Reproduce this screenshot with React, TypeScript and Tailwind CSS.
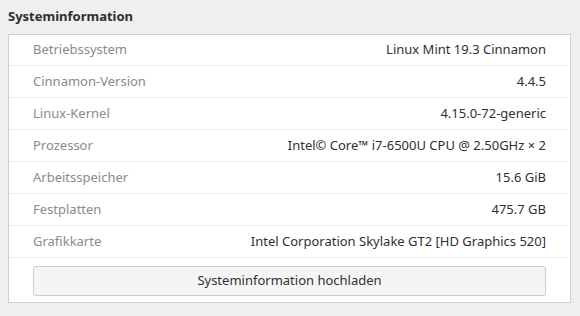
const rows: [string, string][] = [
  ["Betriebssystem", "Linux Mint 19.3 Cinnamon"],
  ["Cinnamon-Version", "4.4.5"],
  ["Linux-Kernel", "4.15.0-72-generic"],
  ["Prozessor", "Intel\u00a9 Core\u2122 i7-6500U CPU @ 2.50GHz \u00d7 2"],
  ["Arbeitsspeicher", "15.6 GiB"],
  ["Festplatten", "475.7 GB"],
  ["Grafikkarte", "Intel Corporation Skylake GT2 [HD Graphics 520]"],
]

export default function App() {
  return (
    <div className="w-[580px] h-[316px] bg-[#efefef] font-['Noto_Sans',sans-serif] text-[13px] text-[#303030] px-2 pt-[7px]">
      <h1 className="font-bold text-[13px] leading-[18px] text-[#2e2e2e] mb-[9px]">Systeminformation</h1>
      <div className="w-[563px] bg-white border border-[#cfcfcf]">
        {rows.map(([label, value], i) => (
          <div
            key={label}
            className={
              "flex items-center justify-between pl-6 pr-6 border-[#ececec] " +
              (i > 0 ? "border-t h-[32px]" : "h-[30px]")
            }
          >
            <span className="text-[#8a8a8a]">{label}</span>
            <span className="text-[#303030]">{value}</span>
          </div>
        ))}
        <div className="border-t border-[#ececec] px-6 pt-[8px] pb-[6px]">
          <button className="w-full h-[30px] rounded-[3px] border border-[#cdcdcd] bg-[#f5f5f5] text-[#303030]">
            Systeminformation hochladen
          </button>
        </div>
      </div>
    </div>
  )
}
